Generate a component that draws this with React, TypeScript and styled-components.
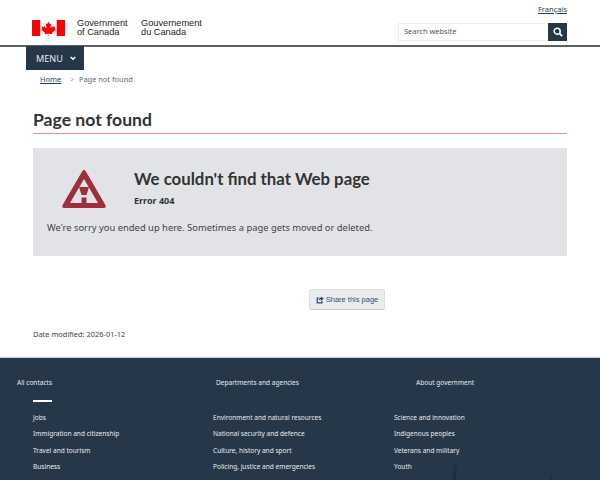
import styled, { createGlobalStyle } from "styled-components";

const GlobalStyle = createGlobalStyle`
  html, body {
    margin: 0;
    padding: 0;
    background: #fff;
  }
  body {
    font-family: "Noto Sans", sans-serif;
    color: #333;
  }
`;

const footerColumns = [
  {
    title: "All contacts",
    links: ["Jobs", "Immigration and citizenship", "Travel and tourism", "Business"],
  },
  {
    title: "Departments and agencies",
    links: [
      "Environment and natural resources",
      "National security and defence",
      "Culture, history and sport",
      "Policing, justice and emergencies",
    ],
  },
  {
    title: "About government",
    links: ["Science and innovation", "Indigenous peoples", "Veterans and military", "Youth"],
  },
];

const FlagIcon = () => (
  <svg width="33" height="16" viewBox="0 0 34 16" preserveAspectRatio="none" aria-hidden="true">
    <rect x="0" y="0" width="8.5" height="16" fill="#f00" />
    <rect x="25.5" y="0" width="8.5" height="16" fill="#f00" />
    <path
      fill="#f00"
      d="M17 1.6l-1.3 2.4c-.15.25-.4.22-.65.08l-.95-.5.7 3.75c.15.68-.33.68-.57.39l-1.65-1.85-.27.94c-.03.12-.16.25-.36.22l-2.1-.44.55 2c.12.44.21.62-.13.74l-.75.35 3.6 2.93c.14.11.21.3.16.48l-.32 1.04 3.6-.41c.11 0 .29.1.29.23l-.17 2.07h.6l-.17-2.07c0-.13.18-.23.29-.23l3.6.41-.32-1.04c-.05-.18.02-.37.16-.48l3.6-2.93-.75-.35c-.34-.12-.25-.3-.13-.74l.55-2-2.1.44c-.2.03-.33-.1-.36-.22l-.27-.94-1.65 1.85c-.24.29-.72.29-.57-.39l.7-3.75-.95.5c-.25.14-.5.17-.65-.08z"
    />
  </svg>
);

const WarningIcon = () => (
  <svg width="44" height="38" viewBox="0 0 44 38" aria-hidden="true">
    <path
      fill="#9c2f3a"
      d="M22 0c.7 0 1.200.3 1.600 1l19.800 34c.8 1.500.2 3-1.400 3H2c-1.600 0-2.200-1.500-1.400-3L20.400 1c.4-.7.900-1 1.600-1z"
    />
    <path fill="#e1e3e7" d="M22 9L8 33h28z" />
    <path fill="#9c2f3a" d="M17 17h10l-2.500 8h-5zM19.500 27.500h5V34h-5z" />
  </svg>
);

export default function App() {
  return (
    <Page>
      <GlobalStyle />
      <Header>
        <Brand>
          <FlagIcon />
          <Wordmark>
            Government
            <br />
            of Canada
          </Wordmark>
          <Wordmark>
            Gouvernement
            <br />
            du Canada
          </Wordmark>
        </Brand>
        <HeaderTools>
          <LangLink href="#">Français</LangLink>
          <SearchBox>
            <SearchField>Search website</SearchField>
            <SearchButton aria-label="Search">
              <svg width="10" height="10" viewBox="0 0 12 12" aria-hidden="true">
                <circle cx="5" cy="5" r="3.600" fill="none" stroke="#fff" strokeWidth="1.800" />
                <path d="M7.800 7.800L11 11" stroke="#fff" strokeWidth="2.200" />
              </svg>
            </SearchButton>
          </SearchBox>
        </HeaderTools>
      </Header>

      <MenuButton>
        MENU
        <svg width="6" height="5" viewBox="0 0 8 6" aria-hidden="true">
          <path d="M1 1l3 3 3-3" fill="none" stroke="#fff" strokeWidth="2" />
        </svg>
      </MenuButton>

      <Breadcrumb>
        <CrumbLink href="#">Home</CrumbLink>
        <CrumbSep>&gt;</CrumbSep>
        <span>Page not found</span>
      </Breadcrumb>

      <Main>
        <PageTitle>Page not found</PageTitle>
        <ErrorPanel>
          <ErrorHead>
            <IconCell>
              <WarningIcon />
            </IconCell>
            <div>
              <ErrorTitle>We couldn't find that Web page</ErrorTitle>
              <ErrorCode>Error 404</ErrorCode>
            </div>
          </ErrorHead>
          <ErrorText>We're sorry you ended up here. Sometimes a page gets moved or deleted.</ErrorText>
        </ErrorPanel>
        <ShareRow>
          <ShareButton>
            <svg width="8" height="8" viewBox="0 0 10 10" aria-hidden="true">
              <path d="M7.500 6v2.500h-6v-6H4" fill="none" stroke="#2a4a78" strokeWidth="1.500" />
              <path d="M6 .5L10 3.300 6 6V4.300C4.600 4.300 4 5 3.600 6 3.600 3.800 4.500 2.400 6 2.300z" fill="#2a4a78" />
            </svg>
            Share this page
          </ShareButton>
        </ShareRow>
        <DateModified>Date modified: 2026-01-12</DateModified>
      </Main>

      <Footer>
        <Skyline width="110" height="18" viewBox="0 0 110 18" aria-hidden="true">
          <path fill="#1e2e40" d="M3 18V6h1V1h3v5h-1v12zM100 18v-6h1.500v6z" />
        </Skyline>
        <FooterTitles>
          {footerColumns.map((col) => (
            <div key={col.title}>{col.title}</div>
          ))}
        </FooterTitles>
        <FooterRule />
        <FooterLists>
          {footerColumns.map((col) => (
            <FooterList key={col.title}>
              {col.links.map((link) => (
                <li key={link}>{link}</li>
              ))}
            </FooterList>
          ))}
        </FooterLists>
      </Footer>
    </Page>
  );
}

const Page = styled.div`
  width: 600px;
  height: 480px;
  overflow: hidden;
`;

const Header = styled.header`
  box-sizing: border-box;
  border-bottom: 2px solid #5a6068;
  height: 47px;
  padding: 0 33px 0 32px;
  display: flex;
  justify-content: space-between;
`;

const Brand = styled.div`
  display: flex;
  align-items: center;
  height: 16px;
  margin-top: 20px;
`;

const Wordmark = styled.div`
  margin-left: 12px;
  font-family: "Liberation Sans", Arial, sans-serif;
  font-size: 9.200px;
  line-height: 9px;
  color: #222;

  & + & {
    margin-left: 13.500px;
  }
`;

const HeaderTools = styled.div`
  display: flex;
  flex-direction: column;
  align-items: flex-end;
  padding-top: 4px;
`;

const LangLink = styled.a`
  font-size: 7.500px;
  line-height: 11px;
  color: #284162;
`;

const SearchBox = styled.div`
  display: flex;
  width: 169px;
  height: 18px;
  margin-top: 8px;
`;

const SearchField = styled.div`
  flex: 1;
  box-sizing: border-box;
  border: 1px solid #eceef0;
  border-right: 0;
  padding-left: 5px;
  font-size: 7.450px;
  line-height: 15px;
  color: #555;
`;

const SearchButton = styled.button`
  width: 19px;
  border: 0;
  padding: 0;
  background: #26374a;
  display: flex;
  align-items: center;
  justify-content: center;
`;

const MenuButton = styled.div`
  width: 58px;
  height: 24px;
  box-sizing: border-box;
  margin-left: 26px;
  margin-top: -1px;
  padding: 1px 0 0 10px;
  background: #26374a;
  color: #e8ebee;
  display: flex;
  align-items: center;
  gap: 7px;
  font-size: 9.100px;
`;

const Breadcrumb = styled.nav`
  display: flex;
  align-items: center;
  height: 18px;
  padding-left: 40px;
  font-size: 7.450px;
  color: #666;
`;

const CrumbLink = styled.a`
  color: #284162;
  text-decoration: underline;
`;

const CrumbSep = styled.span`
  margin: 0 5px 0 9px;
  color: #999;
  font-size: 6.500px;
`;

const Main = styled.main`
  padding: 0 33px;
`;

const PageTitle = styled.h1`
  margin: 19px 0 0;
  padding-bottom: 1px;
  height: 25px;
  border-bottom: 1px solid #d98f93;
  font-family: Lato, sans-serif;
  font-size: 17.600px;
  line-height: 25px;
  font-weight: 700;
  color: #333;
`;

const ErrorPanel = styled.section`
  height: 108px;
  box-sizing: border-box;
  margin-top: 14px;
  padding: 19px 14px 0;
  background: #e1e3e7;
`;

const ErrorHead = styled.div`
  display: flex;
`;

const IconCell = styled.div`
  width: 87px;
  padding: 3px 0 0 15px;
  flex: none;
  box-sizing: border-box;
`;

const ErrorTitle = styled.h2`
  margin: 0;
  font-family: Lato, sans-serif;
  font-size: 16.800px;
  line-height: 24px;
  font-weight: 700;
  color: #333;
`;

const ErrorCode = styled.div`
  margin-top: 3px;
  font-size: 9px;
  line-height: 14px;
  font-weight: 700;
  color: #333;
`;

const ErrorText = styled.p`
  margin: 8px 0 0;
  font-size: 9.400px;
  line-height: 14px;
  color: #444;
`;

const ShareRow = styled.div`
  display: flex;
  margin-top: 33px;
  padding-left: 276px;
`;

const ShareButton = styled.button`
  width: 76px;
  height: 21px;
  padding: 0;
  border: 1px solid #dcdee1;
  border-bottom-color: #c8cacd;
  border-radius: 2px;
  background: #eaebed;
  display: flex;
  align-items: center;
  justify-content: center;
  gap: 2px;
  font-family: "Liberation Sans", Arial, sans-serif;
  font-size: 7.500px;
  color: #335075;
`;

const DateModified = styled.div`
  margin-top: 18px;
  font-size: 7.450px;
  line-height: 12px;
  color: #444;
`;

const Footer = styled.footer`
  position: relative;
  margin-top: 17px;
  height: 124px;
  box-sizing: border-box;
  border-top: 1px solid #c8ccd0;
  background: #26374a;
  color: #e8ebee;
  padding-top: 19px;
  font-size: 6.550px;
`;

const Skyline = styled.svg`
  position: absolute;
  right: 40px;
  bottom: 0;
`;

const FooterTitles = styled.div`
  display: grid;
  grid-template-columns: 199px 200px 1fr;
  padding-left: 17px;
  line-height: 11px;
`;

const FooterRule = styled.div`
  width: 19px;
  height: 2px;
  margin: 12px 0 0 33px;
  background: #fff;
`;

const FooterLists = styled.div`
  position: relative;
  display: grid;
  grid-template-columns: 180px 181px 1fr;
  padding-left: 33px;
  margin-top: 10px;
`;

const FooterList = styled.ul`
  list-style: none;
  margin: 0;
  padding: 0;

  li {
    height: 16.400px;
    line-height: 11px;
    white-space: nowrap;
  }
`;
